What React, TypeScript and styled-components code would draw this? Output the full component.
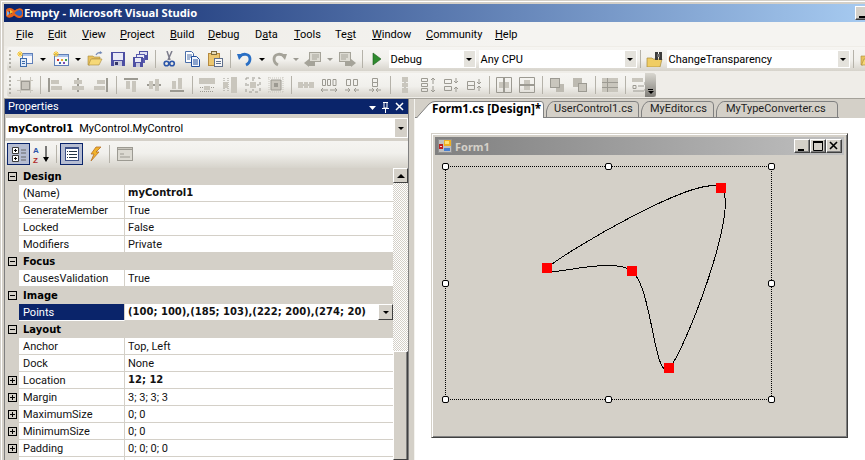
import React from "react";
import styled, { createGlobalStyle } from "styled-components";

const UI = `Roboto, "Noto Sans", "DejaVu Sans", sans-serif`;
const HEAD = `"Noto Sans", "Open Sans", sans-serif`;
const STRONG = `"DejaVu Sans", "Noto Sans", sans-serif`;

const Global = createGlobalStyle`
  html, body { margin: 0; padding: 0; overflow: hidden; background: #d4d0c8; }
  * { box-sizing: border-box; }
`;

const Shell = styled.div`
  width: 865px; height: 460px; overflow: hidden; padding: 4px 0 0 4px;
  display: flex; flex-direction: column; background: #d4d0c8;
  font: 11px/1 ${UI}; color: #000;
  box-shadow: inset 1px 1px 0 #d4d0c8, inset 2px 2px 0 #fff;
`;
const TitleBar = styled.div`
  flex: none; height: 18px; display: flex; align-items: center; justify-content: space-between;
  background: linear-gradient(90deg, #0a246a, #a6caf0); color: #fff;
`;
const AppTitle = styled.div`
  display: flex; align-items: center; gap: 1px; padding-left: 2px;
  font: 700 11.2px/1 ${HEAD}; white-space: nowrap;
`;
const CaptionClip = styled.div`width: 10px; height: 14px; overflow: hidden; flex: none;`;
const CaptionButton = styled.button`
  width: 16px; height: 14px; padding: 0; flex: none; display: block; background: #d4d0c8;
  border: 1px solid; border-color: #fff #404040 #404040 #fff; box-shadow: inset -1px -1px 0 #808080;
  & > svg { display: block; }
`;
const MenuBar = styled.div`
  flex: none; height: 24px; display: flex; align-items: center; padding-left: 12px;
  background: linear-gradient(90deg, #eceae4, #f5f4f1 60%);
`;
const MenuItem = styled.span<{ $w: number }>`
  width: ${(p) => p.$w}px; flex: none; white-space: nowrap; font-size: 11px;
  u { text-decoration-thickness: 1px; text-underline-offset: 1px; }
`;
const Tray = styled.div`
  flex: none; height: 53px; padding: 1px 0 0 3px; display: flex; flex-direction: column; gap: 2px;
  background: #efede8; border-bottom: 1px solid #a5a29a;
`;
const ToolBar = styled.div<{ $end?: boolean }>`
  height: 24px; flex: none; display: flex; align-items: center; padding-left: 2px;
  width: ${(p) => (p.$end ? "649px" : "auto")};
  background: linear-gradient(180deg, #f6f5f2, #f1f0ec 55%, #d6d3cb);
  border-radius: 3px 0 0 3px; position: relative;
`;
const Grip = styled.span`
  width: 4.5px; height: 18px; flex: none;
  background: radial-gradient(circle at 1px 1px, #b0aea6 0 1px, transparent 1.2px) 0 0 / 4px 4px repeat-y;
`;
const ToolBtn = styled.span`
  width: 23px; height: 22px; flex: none; display: flex; align-items: center; justify-content: center;
`;
const DropBtn = styled.span<{ $w?: number; $off?: boolean }>`
  width: ${(p) => p.$w ?? 11}px; height: 22px; flex: none; display: flex; align-items: center; justify-content: center;
  &::after {
    content: ""; border-style: solid; border-width: 3px 3.5px 0; border-color: ${(p) => (p.$off ? "#9c9a92" : "#000")} transparent transparent;
  }
`;
const Sep = styled.span<{ $w?: number }>`
  width: ${(p) => p.$w ?? 7}px; height: 18px; flex: none; display: flex; justify-content: center;
  &::after { content: ""; width: 1px; height: 18px; background: #b5b2a9; }
`;
const Combo = styled.span<{ $w: number; $mr?: number }>`
  width: ${(p) => p.$w}px; margin-right: ${(p) => p.$mr ?? 0}px; height: 18px; flex: none; background: #fff;
  display: flex; align-items: center; padding: 0 1px 0 2px; font-size: 11px; white-space: nowrap;
  & > b { font-weight: 400; flex: 1; }
`;
const ComboArrow = styled.i`
  width: 11px; height: 16px; flex: none; background: #e4e2dc; display: flex; align-items: center; justify-content: center;
  &::after { content: ""; border-style: solid; border-width: 3px 3.5px 0; border-color: #000 transparent transparent; }
`;
const Overflow = styled.span`
  position: absolute; right: 0; top: 0; width: 11px; height: 24px; border-radius: 0 3px 3px 0;
  background: linear-gradient(180deg, #d9d7d0, #807e78); display: flex; flex-direction: column; align-items: center; justify-content: flex-end; padding-bottom: 3px; gap: 1px;
  &::before { content: ""; width: 5px; height: 1px; background: #000; }
  &::after { content: ""; border-style: solid; border-width: 3px 3px 0; border-color: #000 transparent transparent; }
`;
const Main = styled.div`flex: 1; min-height: 0; display: flex;`;
const Panel = styled.section`
  width: 405px; flex: none; display: flex; flex-direction: column;
  border-left: 1px solid #808080; border-right: 1px solid #808080;
`;
const PanelHead = styled.header`
  flex: none; height: 15px; background: #0a246a; color: #fff; display: flex; align-items: center; justify-content: space-between;
  padding: 0 3px 0 3px; font-size: 11px;
`;
const PanelControls = styled.span`display: flex; align-items: center; gap: 4px;`;
const ObjectCombo = styled.div`
  flex: none; height: 20px; margin: 4px 0 3px 1px; background: #fff; display: flex; align-items: center; justify-content: space-between;
  padding: 0 1px 0 2px; font-size: 11px; white-space: nowrap;
  b { font: 700 10px/1 ${STRONG}; margin-right: 6px; }
`;
const ObjectArrow = styled.i`
  width: 12px; height: 18px; background: #d4d0c8; display: flex; align-items: center; justify-content: center;
  &::after { content: ""; border-style: solid; border-width: 3px 3.5px 0; border-color: #000 transparent transparent; }
`;
const PropBar = styled.div`
  flex: none; height: 27px; display: flex; align-items: center; padding: 0 0 1px 2px;
  background: linear-gradient(180deg, #f5f4f1, #f1f0ec 45%, #d6d3cb);
`;
const PropBtn = styled.span<{ $on?: boolean }>`
  width: 23px; height: 22px; flex: none; display: flex; align-items: center; justify-content: center;
  background: ${(p) => (p.$on ? "#b6bdd2" : "transparent")}; border: 1px solid ${(p) => (p.$on ? "#0a246a" : "transparent")};
`;
const PropBody = styled.div`flex: 1; min-height: 0; display: flex;`;
const Rows = styled.div`flex: 1; min-width: 0; background: #fff;`;
const CatRow = styled.div`
  height: 17px; display: flex; align-items: center; background: #d4d0c8; font: 700 10px/1 ${STRONG};
`;
const Gutter = styled.span`
  width: 14px; height: 17px; flex: none; background: #d4d0c8; display: flex; align-items: center; padding-left: 3px;
`;
const Toggle = styled.i<{ $open?: boolean }>`
  width: 9px; height: 9px; border: 1px solid #000; position: relative; display: block;
  &::before { content: ""; position: absolute; left: 1px; right: 1px; top: 3px; height: 1px; background: #000; }
  &::after { content: ""; position: absolute; top: 1px; bottom: 1px; left: 3px; width: 1px; background: ${(p) => (p.$open ? "transparent" : "#000")}; }
`;
const CatLabel = styled.span`padding-left: 4px;`;
const PropRow = styled.div`height: 17px; display: flex; font-size: 11px;`;
const NameCell = styled.span<{ $sel?: boolean }>`
  width: 106px; flex: none; height: 17px; padding-left: 4px; display: flex; align-items: center; white-space: nowrap;
  background: ${(p) => (p.$sel ? "#0a246a" : "#fff")}; color: ${(p) => (p.$sel ? "#fff" : "#111")};
  border-right: 1px solid #d4d0c8; border-bottom: 1px solid ${(p) => (p.$sel ? "#fff" : "#d4d0c8")};
`;
const ValueCell = styled.span<{ $bold?: boolean }>`
  flex: 1; min-width: 0; height: 17px; padding-left: 3px; display: flex; align-items: center; white-space: nowrap; overflow: hidden;
  font: ${(p) => (p.$bold ? `700 10px/1 ${STRONG}` : `400 11px/1 ${UI}`)};
  border-bottom: 1px solid #d4d0c8; color: #111;
  & > em { font-style: normal; flex: 1; min-width: 0; }
`;
const PickButton = styled.i`
  width: 15px; height: 16px; flex: none; background: #d4d0c8; border: 1px solid; border-color: #fff #404040 #404040 #fff;
  display: flex; align-items: center; justify-content: center;
  &::after { content: ""; border-style: solid; border-width: 3px 3.5px 0; border-color: #000 transparent transparent; }
`;
const ScrollBar = styled.div`width: 15px; flex: none; display: flex; flex-direction: column;`;
const ScrollUp = styled.i`
  height: 15px; flex: none; background: #d4d0c8; border: 1px solid; border-color: #fff #404040 #404040 #fff;
  display: flex; align-items: center; justify-content: center;
  &::after { content: ""; border-style: solid; border-width: 0 4px 4px; border-color: transparent transparent #000; }
`;
const ScrollTrack = styled.i`
  height: 168px; flex: none; display: block;
  background: repeating-conic-gradient(#fff 0 25%, #d4d0c8 0 50%) 0 0 / 2px 2px;
`;
const ScrollThumb = styled.i`
  flex: 1; display: block; background: #d4d0c8; border: 1px solid; border-color: #fff #404040 #404040 #fff; box-shadow: inset -1px 0 0 #808080;
`;
const Splitter = styled.div`width: 6px; flex: none; background: #d4d0c8; border-right: 1px solid #f4f3ef;`;
const Doc = styled.section`flex: 1; min-width: 0; background: #fff; display: flex; flex-direction: column;`;
const TabStrip = styled.div`flex: none; height: 19px; background: #d4d0c8; display: flex;`;
const TabRow = styled.div`height: 19px; display: flex; padding-left: 1px; border-bottom: 1px solid #808080;`;
const Tab = styled.div<{ $w: number; $pl: number; $active?: boolean }>`
  position: relative; width: ${(p) => p.$w}px; height: 19px; flex: none; padding: 4px 0 0 ${(p) => p.$pl}px; white-space: nowrap;
  font: ${(p) => (p.$active ? `700 11.7px/1 ${HEAD}` : `400 11px/1.15 ${UI}`)}; color: ${(p) => (p.$active ? "#000" : "#222")};
  z-index: ${(p) => (p.$active ? 1 : 0)};
  & > span { position: relative; }
  & > svg { position: absolute; left: 0; top: 0; }
`;
const DesignSurface = styled.div`flex: 1; min-height: 0; padding: 15px 0 0 16px;`;
const FormWindow = styled.div`
  width: 417px; height: 305px; background: #d4d0c8; padding: 3px; display: flex; flex-direction: column;
  border: 1px solid; border-color: #d4d0c8 #404040 #404040 #d4d0c8;
  box-shadow: inset 1px 1px 0 #fff, inset -1px -1px 0 #808080;
`;
const FormTitle = styled.div`
  height: 18px; flex: none; display: flex; align-items: center; justify-content: space-between; padding: 0 2px 0 3px;
  background: linear-gradient(90deg, #808080, #c0c0c0); color: #d4d0c8; font: 700 11px/1 ${HEAD};
`;
const FormName = styled.span`display: flex; align-items: center; gap: 3px;`;
const FormCaption = styled.span`display: flex; align-items: center;`;
const FormCanvas = styled.svg`display: block; margin: 6px 0 0 5px; flex: none;`;

const R = (p: { x: number; y: number; w: number; h: number; f?: string }) => (
  <rect x={p.x} y={p.y} width={p.w} height={p.h} fill={p.f ?? "#9c9a92"} shapeRendering="crispEdges" />
);
const Ico = ({ children, w = 16, h = 16 }: { children: React.ReactNode; w?: number; h?: number }) => (
  <svg width={w} height={h} viewBox={`0 0 ${w} ${h}`} style={{ display: "block" }}>{children}</svg>
);
const L = "#c9c6bd";

const VsLogo = () => (
  <Ico w={17} h={14}>
    <path d="M1 7C1 3 5 2 8.5 7S16 11 16 7 12 3 8.5 7 1 11 1 7Z" fill="none" stroke="#e8621a" strokeWidth="3.4" />
    <path d="M8.5 7C12 3 16 3 16 7s-4 4-7.5 0Z" fill="#2e62c0" />
    <path d="M4 3.5 7 6 4 8Z" fill="#f4c430" /><path d="M1 5 4 7 1 10Z" fill="#7fb2e5" />
  </Ico>
);
const NewProject = () => (
  <Ico>
    <R x={5} y={2} w={11} h={11} f="#5f7fb8" /><R x={6} y={5} w={9} h={7} f="#f7f7fa" /><R x={6} y={3} w={9} h={2} f="#a9c2ea" />
    <path d="M3 0v6M0 3h6M1 1l4 4M5 1 1 5" stroke="#f4c430" /><R x={3} y={7} w={7} h={9} f="#3b6aaa" /><R x={4} y={8} w={5} h={7} f="#dfe9f7" />
    <R x={5} y={10} w={3} h={1} f="#3b6aaa" /><R x={5} y={12} w={3} h={1} f="#3b6aaa" />
  </Ico>
);
const AddItem = () => (
  <Ico>
    <R x={1} y={3} w={15} h={12} f="#5f7fb8" /><R x={2} y={6} w={13} h={8} f="#f7f7fa" /><R x={2} y={4} w={13} h={2} f="#a9c2ea" />
    <path d="M3 0v6M0 3h6M1 1l4 4M5 1 1 5" stroke="#f4c430" />
    <R x={4} y={8} w={2} h={2} f="#d6352a" /><R x={8} y={8} w={2} h={2} f="#e8a92c" /><R x={12} y={8} w={2} h={2} f="#3fa34d" /><R x={6} y={11} w={2} h={2} f="#3b6aaa" /><R x={10} y={11} w={2} h={2} f="#7a4ab5" />
  </Ico>
);
const Folder = () => (
  <Ico>
    <path d="M1 5h5l1 1h6v2H5L3 14H1Z" fill="#e8c25e" stroke="#a88a3c" strokeWidth=".6" />
    <path d="M4 8h11l-3 6H1.5Z" fill="#f6d877" stroke="#a88a3c" strokeWidth=".6" />
    <path d="M9 4c1-2 3-3 5-2" fill="none" stroke="#6f86b5" strokeWidth="1.2" /><path d="M13 0l2.500 2-3 1Z" fill="#6f86b5" />
  </Ico>
);
const Floppy = () => (
  <Ico>
    <R x={1} y={1} w={14} h={14} f="#4d4fa3" /><R x={3} y={2} w={10} h={7} f="#e9eaf6" /><R x={4} y={10} w={8} h={5} f="#c8c9dd" /><R x={5} y={11} w={3} h={3} f="#343668" />
  </Ico>
);
const SaveAll = () => (
  <Ico>
    <R x={6} y={0} w={9} h={9} f="#4d4fa3" /><R x={7} y={1} w={7} h={3} f="#dfe0f2" />
    <R x={3} y={3} w={9} h={9} f="#5b5db0" /><R x={4} y={4} w={7} h={3} f="#e9eaf6" />
    <R x={0} y={6} w={10} h={10} f="#4d4fa3" /><R x={2} y={7} w={6} h={4} f="#e9eaf6" /><R x={3} y={12} w={4} h={4} f="#c8c9dd" />
  </Ico>
);
const Cut = () => (
  <Ico>
    <path d="M6 0 9 9M11 0 7 9" stroke="#7d7d8c" strokeWidth="1.500" fill="none" />
    <circle cx="5.500" cy="12.500" r="2.300" fill="none" stroke="#2b55a8" strokeWidth="1.600" /><circle cx="11" cy="12.500" r="2.300" fill="none" stroke="#2b55a8" strokeWidth="1.600" />
  </Ico>
);
const CopyIcon = () => (
  <Ico>
    <path d="M1.500.5h6l2 2v9h-8Z" fill="#fff" stroke="#4a6ea9" /><path d="M3 4h5M3 6h5M3 8h3" stroke="#4a6ea9" />
    <path d="M7.500 5.500h5l3 3v7h-8Z" fill="#f4f7fd" stroke="#1f4d9c" /><path d="M9 9h5M9 11h5M9 13h5" stroke="#1f4d9c" />
  </Ico>
);
const Paste = () => (
  <Ico>
    <R x={1} y={2} w={12} h={13} f="#b68a3f" /><R x={2} y={3} w={10} h={11} f="#ecc770" /><R x={4} y={0} w={6} h={4} f="#7d6a3c" /><R x={5} y={1} w={4} h={2} f="#e7dcb8" />
    <R x={7} y={7} w={9} h={9} f="#5f6f8c" /><R x={8} y={8} w={7} h={7} f="#f8f8f8" /><R x={9} y={10} w={5} h={1} f="#5f6f8c" /><R x={9} y={12} w={5} h={1} f="#5f6f8c" />
  </Ico>
);
const Undo = () => (
  <Ico>
    <path d="M3 5C7 2 13 3 13 8c0 3-2 5-4 6" fill="none" stroke="#2a6fc4" strokeWidth="2.800" /><path d="M0 3h7L2 9Z" fill="#2a6fc4" />
  </Ico>
);
const Redo = () => (
  <Ico>
    <path d="M13 5C9 2 3 3 3 8c0 3 2 5 4 6" fill="none" stroke="#a5a399" strokeWidth="2.800" /><path d="M16 3H9l5 6Z" fill="#a5a399" />
  </Ico>
);
const NavBack = () => (
  <Ico w={18}>
    <R x={5} y={1} w={12} h={10} f="#a5a399" /><R x={6} y={2} w={10} h={8} f="#dedcd4" />
    <path d="M8 4h7M8 6h7M8 8h5" stroke="#a5a399" /><path d="M0 12l5-4v2h6v5H5v1Z" fill="#a5a399" />
  </Ico>
);
const NavFwd = () => (
  <Ico w={18}>
    <R x={1} y={1} w={12} h={10} f="#a5a399" /><R x={2} y={2} w={10} h={8} f="#dedcd4" />
    <path d="M3 4h7M3 6h7M3 8h5" stroke="#a5a399" /><path d="M18 12l-5-4v2H7v5h6v1Z" fill="#a5a399" />
  </Ico>
);
const Start = () => (
  <Ico><path d="M4 2 12 8 4 14Z" fill="#2e8b2e" stroke="#1d5c1d" strokeWidth=".6" /></Ico>
);
const FindFolder = () => (
  <Ico w={18}>
    <path d="M1 7h5l1 1h9l-2 8H1Z" fill="#f0cd63" stroke="#a88a3c" strokeWidth=".7" />
    <R x={9} y={1} w={3} h={8} f="#3b3b3b" /><R x={13} y={1} w={3} h={8} f="#3b3b3b" /><R x={11} y={3} w={3} h={3} f="#6b6b6b" />
  </Ico>
);
const G = {
  grid: <><path d="M0 3h16M0 13h16M3 0v16M13 0v16" stroke={L} shapeRendering="crispEdges" /><R x={4} y={4} w={9} h={9} /><R x={5} y={5} w={7} h={7} f={L} /></>,
  aL: <><R x={1} y={1} w={2} h={14} /><R x={4} y={3} w={8} h={4} f={L} /><R x={4} y={9} w={11} h={4} f={L} /></>,
  aC: <><R x={7} y={1} w={2} h={14} /><R x={4} y={3} w={8} h={4} f={L} /><R x={2} y={9} w={12} h={4} f={L} /></>,
  aR: <><R x={13} y={1} w={2} h={14} /><R x={4} y={3} w={8} h={4} f={L} /><R x={1} y={9} w={11} h={4} f={L} /></>,
  aT: <><R x={1} y={1} w={14} h={2} /><R x={3} y={4} w={4} h={8} f={L} /><R x={9} y={4} w={4} h={11} f={L} /></>,
  aM: <><R x={1} y={7} w={14} h={2} /><R x={3} y={4} w={4} h={8} f={L} /><R x={9} y={2} w={4} h={12} f={L} /></>,
  aB: <><R x={1} y={13} w={14} h={2} /><R x={3} y={4} w={4} h={8} f={L} /><R x={9} y={1} w={4} h={11} f={L} /></>,
  sW: <><R x={0} y={1} w={16} h={6} f={L} /><path d="M1 10.500h3M12 10.500h3M1 14.500h14" stroke="#9c9a92" strokeDasharray="1 1" /><R x={5} y={9} w={6} h={4} f={L} /></>,
  sH: <><R x={9} y={0} w={6} h={16} f={L} /><path d="M2 1v14M6 1v14" stroke="#9c9a92" strokeDasharray="1 1" /><R x={1} y={5} w={5} h={6} f={L} /></>,
  sG: <><path d="M1 1h14v14H1Z" fill="none" stroke="#9c9a92" strokeDasharray="3 3" /><R x={5} y={5} w={6} h={6} f={L} /><path d="M8 2v2M8 12v2M2 8h2M12 8h2" stroke="#9c9a92" /></>,
  sS: <><path d="M3 3h10v10H3Z" fill={L} stroke="#9c9a92" /><path d="M0 1h16M0 15h16M1 0v16M15 0v16" stroke="#c9c6bd" strokeDasharray="1 1" /><R x={6} y={6} w={4} h={4} /></>,
  hE: <><R x={0} y={5} w={5} h={6} f={L} /><R x={6} y={5} w={4} h={6} f={L} /><R x={11} y={5} w={5} h={6} f={L} /><path d="M5 8h1M10 8h1" stroke="#9c9a92" /></>,
  hI: <><path d="M1.500 2.500h3v6h-3ZM6.500 2.500h3v6h-3ZM12 2.500h3v6h-3Z" fill="none" stroke="#9c9a92" /><path d="M0 13h7M9 13h7M2 11l-2 2 2 2M14 11l2 2-2 2" stroke="#9c9a92" fill="none" /></>,
  hD: <><path d="M2.500 2.500h4v6h-4ZM9.500 2.500h4v6h-4Z" fill="none" stroke="#9c9a92" /><path d="M1 13h5M10 13h5M4 11l2 2-2 2M12 11l-2 2 2 2" stroke="#9c9a92" fill="none" /></>,
  hR: <><path d="M5.500 1.500h5v4h-5ZM5.500 5.500h5v4h-5Z" fill="none" stroke="#9c9a92" /><path d="M2 13h5M9 13h5M5 11l2 2-2 2M11 11l-2 2 2 2" stroke="#9c9a92" fill="none" /></>,
  vE: <><R x={5} y={0} w={6} h={5} f={L} /><R x={5} y={6} w={6} h={4} f={L} /><R x={5} y={11} w={6} h={5} f={L} /><path d="M8 5v1M8 10v1" stroke="#9c9a92" /></>,
  vI: <><path d="M1.500 1.500h6v3h-6ZM1.500 6.500h6v3h-6ZM1.500 11.500h6v3h-6Z" fill="none" stroke="#9c9a92" /><path d="M13 1v6M13 9v6M11 3l2-2 2 2M11 13l2 2 2-2" stroke="#9c9a92" fill="none" /></>,
  vD: <><path d="M1.500 2.500h7v4h-7ZM1.500 9.500h7v4h-7Z" fill="none" stroke="#9c9a92" /><path d="M13 1v5M13 10v5M11 4l2 2 2-2M11 12l2-2 2 2" stroke="#9c9a92" fill="none" /></>,
  vR: <><path d="M1.500 4.500h7v4h-7ZM1.500 8.500h7v4h-7Z" fill="none" stroke="#9c9a92" /><path d="M13 2v5M13 9v5M11 5l2 2 2-2M11 11l2-2 2 2" stroke="#9c9a92" fill="none" /></>,
  cH: <><path d="M.5.500h15v15H.5Z" fill="none" stroke="#9c9a92" /><R x={3} y={5} w={10} h={6} f={L} /><R x={7} y={1} w={2} h={14} /></>,
  cV: <><path d="M.5.500h15v15H.5Z" fill="none" stroke="#9c9a92" /><R x={5} y={3} w={6} h={10} f={L} /><R x={1} y={7} w={14} h={2} /></>,
  front: <><R x={7} y={7} w={8} h={8} f="#bdbab1" /><R x={1} y={1} w={10} h={10} /><R x={2} y={2} w={8} h={8} f={L} /></>,
  back: <><R x={1} y={1} w={9} h={9} f="#bdbab1" /><R x={6} y={6} w={9} h={9} /><R x={7} y={7} w={7} h={7} f={L} /></>,
  tab: <><R x={0} y={1} w={16} h={14} f={L} /><path d="M0 5.500h16M0 10.500h16M5.500 1v14" stroke="#9c9a92" /></>,
  order: <><R x={0} y={1} w={11} h={4} f={L} /><path d="M1 8.500h3v3H1Z" fill="none" stroke="#9c9a92" /><path d="M6 9h6M1 14h11" stroke="#9c9a92" /><path d="M13 2h3v3h-3v3h3M13 10h3v2h-3v2h3" stroke="#9c9a92" fill="none" /></>,
};
type GK = keyof typeof G;
const groups: (GK | "|")[] = ["grid", "|", "aL", "aC", "aR", "|", "aT", "aM", "aB", "|", "sW", "sH", "sG", "sS", "|", "hE", "hI", "hD", "hR", "|", "vE", "vI", "vD", "vR", "|", "cH", "cV", "|", "front", "back", "|", "tab", "|", "order"];

const Categorized = () => (
  <Ico><path d="M1.500 1.500h6v6h-6ZM1.500 9.500h6v6h-6Z" fill="#fff" stroke="#3b3b3b" /><path d="M3 4.500h3M4.500 3v3M3 12.500h3M4.500 11v3" stroke="#000" /><path d="M10 4h5M10 7h5M10 11h5M10 14h5" stroke="#666" /></Ico>
);
const AZ = () => (
  <svg width="20" height="19" viewBox="0 0 20 19" style={{ display: "block" }}>
    <text x="1" y="8" fontFamily="Liberation Sans" fontWeight="700" fontSize="8" fill="#2b55a8">A</text>
    <text x="1" y="18" fontFamily="Liberation Sans" fontWeight="700" fontSize="8" fill="#b02a2a">Z</text>
    <path d="M14 1v14" stroke="#000" /><path d="M11 12h6l-3 5Z" fill="#000" />
  </svg>
);
const PropList = () => (
  <Ico><R x={1} y={1} w={14} h={14} f="#3b4f86" /><R x={2} y={3} w={12} h={11} f="#fff" /><path d="M3 5.500h1M5 5.500h8M3 8.500h1M5 8.500h8M3 11.500h1M5 11.500h8" stroke="#234" /></Ico>
);
const Bolt = () => (
  <Ico><path d="M9 1h5L9 6h3L4 15l3-7H4Z" fill="#f1b32c" stroke="#b5702a" strokeWidth=".8" /></Ico>
);
const Pages = () => (
  <Ico><R x={0} y={1} w={16} h={14} /><R x={1} y={4} w={14} h={10} f="#dcdad2" /><R x={1} y={2} w={14} h={1} f={L} /><path d="M3 8h4M3 11h10" stroke="#9c9a92" /></Ico>
);
const FormIcon = () => (
  <Ico w={14} h={14}>
    <R x={0} y={0} w={14} h={14} f="#909090" /><R x={1} y={1} w={12} h={12} f="#c0c0c0" />
    <R x={6} y={1} w={7} h={6} f="#f0b020" /><R x={7} y={2} w={4} h={3} f="#fbe27a" />
    <R x={1} y={5} w={4} h={5} f="#c02020" /><R x={2} y={7} w={2} h={1} f="#f6d0d0" />
    <R x={6} y={9} w={6} h={3} f="#4a80d0" />
  </Ico>
);
const Dash = () => <svg width="14" height="12" style={{ display: "block" }}><path d="M3 10h6" stroke="#000" strokeWidth="2" /></svg>;
const MaxG = () => <svg width="14" height="12" style={{ display: "block" }}><path d="M2.500 1.500h9v9h-9Z" fill="none" stroke="#000" /><path d="M2 2h10" stroke="#000" strokeWidth="2" /></svg>;
const CloseG = () => <svg width="14" height="12" style={{ display: "block" }}><path d="M3 2l7 7M10 2l-7 7" stroke="#000" strokeWidth="1.600" /></svg>;

const menus: [string, string, string, number][] = [
  ["", "F", "ile", 32], ["", "E", "dit", 34], ["", "V", "iew", 38], ["", "P", "roject", 50], ["", "B", "uild", 38],
  ["", "D", "ebug", 47], ["D", "a", "ta", 39], ["", "T", "ools", 41], ["Te", "s", "t", 37], ["", "W", "indow", 54],
  ["", "C", "ommunity", 69], ["", "H", "elp", 30],
];

type Item = { c: string } | { n: string; v: string; bold?: boolean; plus?: boolean; sel?: boolean };
const items: Item[] = [
  { c: "Design" }, { n: "(Name)", v: "myControl1", bold: true }, { n: "GenerateMember", v: "True" }, { n: "Locked", v: "False" }, { n: "Modifiers", v: "Private" },
  { c: "Focus" }, { n: "CausesValidation", v: "True" },
  { c: "Image" }, { n: "Points", v: "(100; 100),(185; 103),(222; 200),(274; 20)", bold: true, sel: true },
  { c: "Layout" }, { n: "Anchor", v: "Top, Left" }, { n: "Dock", v: "None" },
  { n: "Location", v: "12; 12", bold: true, plus: true }, { n: "Margin", v: "3; 3; 3; 3", plus: true },
  { n: "MaximumSize", v: "0; 0", plus: true }, { n: "MinimumSize", v: "0; 0", plus: true }, { n: "Padding", v: "0; 0; 0; 0", plus: true },
  { n: "", v: "" },
];

const tabs = [
  { t: "Form1.cs [Design]*", w: 129, pl: 16, active: true },
  { t: "UserControl1.cs", w: 95, pl: 9 },
  { t: "MyEditor.cs", w: 75, pl: 10 },
  { t: "MyTypeConverter.cs", w: 124, pl: 11 },
];
const tabPath = (w: number, active?: boolean) =>
  active
    ? `M.5 19 L13 5 Q16 2.500 19 2.500 H${w - 4} Q${w - 1.500} 2.500 ${w - 1.500} 6 V19`
    : `M1.500 18 V12 Q3 5 7 3 Q8 2.500 10 2.500 H${w - 5} Q${w - 1.500} 2.500 ${w - 1.500} 6 V18`;

const pts = [[547, 268], [632, 271], [669, 368], [721, 188]];
const curve = () => {
  let d = `M${pts[0][0]} ${pts[0][1]}`;
  pts.forEach((p, i) => {
    const n = pts.length;
    const prev = pts[(i + n - 1) % n], q = pts[(i + 1) % n], next = pts[(i + 2) % n];
    d += `C${p[0] + (q[0] - prev[0]) / 6} ${p[1] + (q[1] - prev[1]) / 6} ${q[0] - (next[0] - p[0]) / 6} ${q[1] - (next[1] - p[1]) / 6} ${q[0]} ${q[1]}`;
  });
  return d + "Z";
};
const hx = [445, 608, 771], hy = [166, 283, 399];

export default function App() {
  return (
    <Shell>
      <Global />
      <TitleBar>
        <AppTitle><VsLogo />Empty - Microsoft Visual Studio</AppTitle>
        <CaptionClip><CaptionButton><Dash /></CaptionButton></CaptionClip>
      </TitleBar>
      <MenuBar>
        {menus.map(([a, u, b, w]) => (
          <MenuItem key={u + b} $w={w}>{a}<u>{u}</u>{b}</MenuItem>
        ))}
      </MenuBar>
      <Tray>
        <ToolBar>
          <Grip />
          <ToolBtn><NewProject /></ToolBtn><DropBtn $w={13} />
          <ToolBtn><AddItem /></ToolBtn><DropBtn />
          <ToolBtn><Folder /></ToolBtn><ToolBtn><Floppy /></ToolBtn><ToolBtn><SaveAll /></ToolBtn>
          <Sep $w={5} />
          <ToolBtn><Cut /></ToolBtn><ToolBtn><CopyIcon /></ToolBtn><ToolBtn><Paste /></ToolBtn>
          <Sep />
          <ToolBtn><Undo /></ToolBtn><DropBtn />
          <ToolBtn><Redo /></ToolBtn><DropBtn $off />
          <ToolBtn><NavBack /></ToolBtn><DropBtn $off />
          <ToolBtn><NavFwd /></ToolBtn>
          <Sep />
          <ToolBtn><Start /></ToolBtn>
          <Combo $w={87} $mr={3}><b>Debug</b><ComboArrow /></Combo>
          <Combo $w={158}><b>Any CPU</b><ComboArrow /></Combo>
          <Sep />
          <ToolBtn><FindFolder /></ToolBtn>
          <Combo $w={183}><b>ChangeTransparency</b><ComboArrow /></Combo>
          <Sep />
          <ToolBtn><Folder /></ToolBtn>
        </ToolBar>
        <ToolBar $end>
          <Grip />
          {groups.map((g, i) =>
            g === "|" ? <Sep key={i} /> : <ToolBtn key={i}><Ico>{G[g]}</Ico></ToolBtn>
          )}
          <Overflow />
        </ToolBar>
      </Tray>
      <Main>
        <Panel>
          <PanelHead>
            Properties
            <PanelControls>
              <svg width="9" height="12"><path d="M1 5h7L4.500 9Z" fill="#fff" /></svg>
              <svg width="9" height="12"><path d="M2 1.500h5M3 2v5h3V2M1 7.500h7M4.500 8v4" stroke="#fff" fill="none" /></svg>
              <svg width="11" height="12"><path d="M2 2l7 7M9 2 2 9" stroke="#fff" strokeWidth="1.500" /></svg>
            </PanelControls>
          </PanelHead>
          <ObjectCombo><span><b>myControl1</b>MyControl.MyControl</span><ObjectArrow /></ObjectCombo>
          <PropBar>
            <PropBtn $on><Categorized /></PropBtn>
            <PropBtn><AZ /></PropBtn>
            <Sep />
            <PropBtn $on><PropList /></PropBtn>
            <PropBtn><Bolt /></PropBtn>
            <Sep />
            <PropBtn><Pages /></PropBtn>
          </PropBar>
          <PropBody>
            <Rows>
              {items.map((it, i) =>
                "c" in it ? (
                  <CatRow key={i}><Gutter><Toggle $open /></Gutter><CatLabel>{it.c}</CatLabel></CatRow>
                ) : (
                  <PropRow key={i}>
                    <Gutter>{it.plus && <Toggle />}</Gutter>
                    <NameCell $sel={it.sel}>{it.n}</NameCell>
                    <ValueCell $bold={it.bold}><em>{it.v}</em>{it.sel && <PickButton />}</ValueCell>
                  </PropRow>
                )
              )}
            </Rows>
            <ScrollBar><ScrollUp /><ScrollTrack /><ScrollThumb /></ScrollBar>
          </PropBody>
        </Panel>
        <Splitter />
        <Doc>
          <TabStrip>
            <TabRow>
              {tabs.map((t) => (
                <Tab key={t.t} $w={t.w} $pl={t.pl} $active={t.active}>
                  <svg width={t.w} height="19">
                    <path d={tabPath(t.w, t.active)} fill={t.active ? "#fff" : "#d4d0c8"} stroke="#808080" />
                  </svg>
                  <span>{t.t}</span>
                </Tab>
              ))}
            </TabRow>
          </TabStrip>
          <DesignSurface>
            <FormWindow>
              <FormTitle>
                <FormName><FormIcon />Form1</FormName>
                <FormCaption>
                  <CaptionButton><Dash /></CaptionButton>
                  <CaptionButton><MaxG /></CaptionButton>
                  <CaptionButton><CloseG /></CaptionButton>
                </FormCaption>
              </FormTitle>
              <FormCanvas width="340" height="245" viewBox="440 161 340 245">
                <rect x="445.5" y="166.5" width="326" height="233" fill="none" stroke="#000" strokeDasharray="1 1" shapeRendering="crispEdges" />
                {hy.flatMap((y, j) =>
                  hx.map((x, i) =>
                    i === 1 && j === 1 ? null : (
                      <rect key={`${i}-${j}`} x={x - 2.5} y={y - 2.5} width="6" height="6" rx="1.500" fill="#fff" stroke="#000" />
                    )
                  )
                )}
                <path d={curve()} fill="none" stroke="#000" shapeRendering="crispEdges" />
                {pts.map(([x, y]) => (
                  <rect key={x} x={x - 5} y={y - 5} width="10" height="10" fill="#f00" />
                ))}
              </FormCanvas>
            </FormWindow>
          </DesignSurface>
        </Doc>
      </Main>
    </Shell>
  );
}
